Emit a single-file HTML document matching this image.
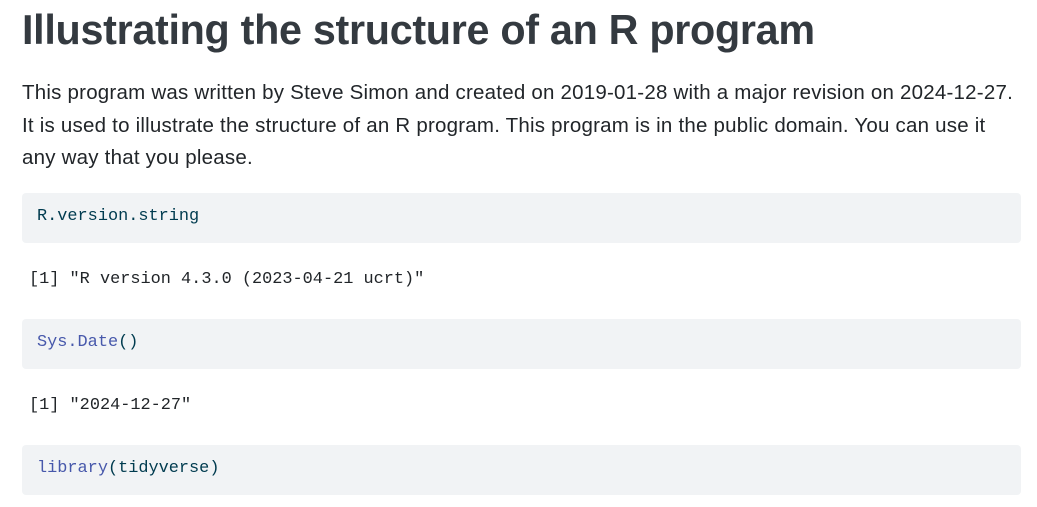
<!DOCTYPE html>
<html><head><style>
body{margin:0;background:#fff;font-family:"Liberation Sans",sans-serif;color:#212529;}
h1{position:absolute;left:22px;top:7px;margin:0;font-size:41.3px;font-weight:bold;color:#343a40;letter-spacing:-0.3px;white-space:nowrap;}
p{position:absolute;left:22px;top:77px;margin:0;width:1002px;font-size:20.5px;line-height:32.5px;letter-spacing:0.22px;}
.code{position:absolute;left:22px;width:999px;height:50px;background:#f1f3f5;border-radius:4px;}
.t{position:absolute;font-family:"Liberation Mono",monospace;font-size:16.9px;white-space:pre;}
.c{color:#003b4f;}
.f{color:#4758ab;}
</style></head><body>
<h1>Illustrating the structure of an R program</h1>
<p>This program was written by Steve Simon and created on 2019-01-28 with a major revision on 2024-12-27.<br>It is used to illustrate the structure of an R program. This program is in the public domain. You can use it any way that you please.</p>
<div class="code" style="top:193px"></div>
<div class="t c" style="left:37px;top:207px">R.version.string</div>
<div class="t" style="left:29px;top:270px">[1] "R version 4.3.0 (2023-04-21 ucrt)"</div>
<div class="code" style="top:319px"></div>
<div class="t" style="left:37px;top:333px"><span class="f">Sys.Date</span><span class="c">()</span></div>
<div class="t" style="left:29px;top:396px">[1] "2024-12-27"</div>
<div class="code" style="top:445px"></div>
<div class="t" style="left:37px;top:459px"><span class="f">library</span><span class="c">(tidyverse)</span></div>
</body></html>
